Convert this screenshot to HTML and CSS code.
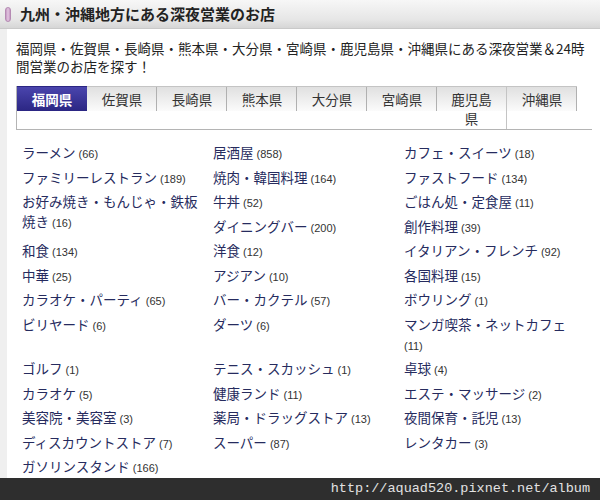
FILE: index.html
```html
<!DOCTYPE html>
<html>
<head>
    <meta charset="utf-8">
    <link rel="stylesheet" href="styles.css">
</head>
<body>
    <div class="title-bar">
        <span class="marker"></span>
        <h1>九州・沖縄地方にある深夜営業のお店</h1>
    </div>

    <div class="content">
        <p class="intro">福岡県・佐賀県・長崎県・熊本県・大分県・宮崎県・鹿児島県・沖縄県にある深夜営業＆24時間営業のお店を探す！</p>

        <div class="tabs">
            <a class="tab active">福岡県</a>
            <a class="tab">佐賀県</a>
            <a class="tab">長崎県</a>
            <a class="tab">熊本県</a>
            <a class="tab">大分県</a>
            <a class="tab">宮崎県</a>
            <a class="tab tall">鹿児島県</a>
            <a class="tab">沖縄県</a>
        </div>

        <ul class="shops">
            <li><a>ラーメン</a> <span class="count">(66)</span></li>
            <li><a>居酒屋</a> <span class="count">(858)</span></li>
            <li><a>カフェ・スイーツ</a> <span class="count">(18)</span></li>

            <li><a>ファミリーレストラン</a> <span class="count">(189)</span></li>
            <li><a>焼肉・韓国料理</a> <span class="count">(164)</span></li>
            <li><a>ファストフード</a> <span class="count">(134)</span></li>

            <li class="double"><a>お好み焼き・もんじゃ・鉄板焼き</a> <span class="count">(16)</span></li>
            <li><a>牛丼</a> <span class="count">(52)</span></li>
            <li><a>ごはん処・定食屋</a> <span class="count">(11)</span></li>
            <li><a>ダイニングバー</a> <span class="count">(200)</span></li>
            <li><a>創作料理</a> <span class="count">(39)</span></li>

            <li><a>和食</a> <span class="count">(134)</span></li>
            <li><a>洋食</a> <span class="count">(12)</span></li>
            <li><a>イタリアン・フレンチ</a> <span class="count">(92)</span></li>

            <li><a>中華</a> <span class="count">(25)</span></li>
            <li><a>アジアン</a> <span class="count">(10)</span></li>
            <li><a>各国料理</a> <span class="count">(15)</span></li>

            <li><a>カラオケ・パーティ</a> <span class="count">(65)</span></li>
            <li><a>バー・カクテル</a> <span class="count">(57)</span></li>
            <li><a>ボウリング</a> <span class="count">(1)</span></li>

            <li><a>ビリヤード</a> <span class="count">(6)</span></li>
            <li><a>ダーツ</a> <span class="count">(6)</span></li>
            <li><a>マンガ喫茶・ネットカフェ</a> <span class="count">(11)</span></li>

            <li><a>ゴルフ</a> <span class="count">(1)</span></li>
            <li><a>テニス・スカッシュ</a> <span class="count">(1)</span></li>
            <li><a>卓球</a> <span class="count">(4)</span></li>

            <li><a>カラオケ</a> <span class="count">(5)</span></li>
            <li><a>健康ランド</a> <span class="count">(11)</span></li>
            <li><a>エステ・マッサージ</a> <span class="count">(2)</span></li>

            <li><a>美容院・美容室</a> <span class="count">(3)</span></li>
            <li><a>薬局・ドラッグストア</a> <span class="count">(13)</span></li>
            <li><a>夜間保育・託児</a> <span class="count">(13)</span></li>

            <li><a>ディスカウントストア</a> <span class="count">(7)</span></li>
            <li><a>スーパー</a> <span class="count">(87)</span></li>
            <li><a>レンタカー</a> <span class="count">(3)</span></li>

            <li><a>ガソリンスタンド</a> <span class="count">(166)</span></li>
        </ul>
    </div>

    <div class="watermark">http://aquad520.pixnet.net/album</div>
</body>
</html>
```

FILE: styles.css
```css
body {
    margin: 0;
    background: #efefef;
    font-family: "Noto Sans CJK JP", sans-serif;
    color: #222;
}

.title-bar {
    display: flex;
    align-items: center;
    gap: 9px;
    height: 28px;
    padding-left: 5px;
    background: linear-gradient(#f7f7f7, #e6e6e6 70%, #d6d6d6);
    border-bottom: 1px solid #c9c9c9;
}

.marker {
    width: 4px;
    height: 13px;
    background: linear-gradient(to right, #c596c3, #e2c6e0, #c596c3);
    border: 1px solid #b58ab3;
    border-radius: 3px;
}

.title-bar h1 {
    margin: 0;
    font-size: 15px;
    font-weight: bold;
    line-height: 20px;
    color: #222;
}

.content {
    margin-left: 7px;
    padding: 10px 8px 40px 9px;
    background: #fff;
    min-height: 420px;
}

.intro {
    margin: 0 0 11px;
    font-size: 13.5px;
    line-height: 18px;
}

/* prefecture tabs */
.tabs {
    display: flex;
    border-left: 1px solid #b4b4b4;
    border-bottom: 1px solid #b4b4b4;
}

.tab {
    flex: 0 0 70px;
    box-sizing: border-box;
    padding: 3px 10px 1px;
    border-top: 1px solid #c4c4c4;
    font-size: 13.5px;
    line-height: 19px;
    text-align: center;
    color: #333;
    background:
        linear-gradient(#b0b0b0, #b0b0b0) no-repeat right top / 1px 24px,
        linear-gradient(#e0e0e0, #fbfbfb) no-repeat left top / 100% 24px;
}

.tab.active {
    color: #fff;
    font-weight: bold;
    background: linear-gradient(#4a45ad, #2b2683) no-repeat left top / 100% 24px;
    border-top-color: #2b2683;
}

.tab.tall {
    border-right: 1px solid #c4c4c4;
    background: linear-gradient(#e0e0e0, #fbfbfb) no-repeat left top / 100% 24px;
}

/* shop category list */
.shops {
    display: grid;
    grid-template-columns: repeat(3, 191px);
    margin: 10px 0 0;
    padding: 0 0 0 6px;
    list-style: none;
}

.shops li {
    padding: 2px 12px 2.5px 0;
    font-size: 13.5px;
    line-height: 20px;
}

.shops li.double {
    grid-row: span 2;
}

.shops a {
    color: #262b5e;
}

.count {
    font-family: "Liberation Sans", sans-serif;
    font-size: 11px;
    line-height: 1;
    color: #333;
}

.watermark {
    position: fixed;
    left: 0;
    right: 0;
    bottom: 0;
    height: 22px;
    padding-right: 10px;
    background: #2e2e2e;
    color: #e2e2e2;
    font-family: "Liberation Mono", monospace;
    font-size: 13.5px;
    line-height: 22px;
    text-align: right;
}
```
